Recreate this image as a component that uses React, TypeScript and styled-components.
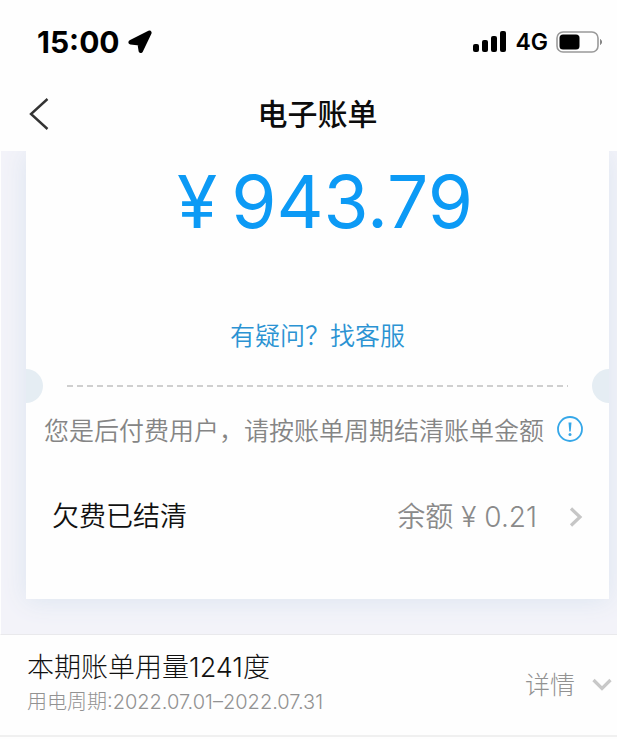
import React from "react";
import styled, { createGlobalStyle } from "styled-components";

const cjk = '"Noto Sans CJK SC", sans-serif';

const GlobalStyle = createGlobalStyle`
  * { box-sizing: border-box; }
  body {
    margin: 0;
    background: #fefefe;
    color: #111;
    font-family: Inter, ${cjk};
  }
  button {
    margin: 0;
    padding: 0;
    border: 0;
    background: none;
    color: inherit;
    font: inherit;
    text-align: left;
    cursor: pointer;
  }
`;

const Page = styled.div`
  display: flex;
  flex-direction: column;
`;

const StatusBar = styled.div`
  display: flex;
  align-items: center;
  justify-content: space-between;
  height: 84px;
  padding: 0 14px 0 37px;
  color: #000;
`;

const StatusGroup = styled.div`
  display: flex;
  align-items: center;
  gap: 8px;
`;

const Clock = styled.time`
  font-size: 30px;
  font-weight: 700;
  line-height: 32px;
`;

const Network = styled.span`
  font-size: 23px;
  font-weight: 600;
  line-height: 32px;
`;

const NavBar = styled.header`
  display: grid;
  grid-template-columns: 64px 1fr 46px;
  align-items: center;
  height: 67px;
  padding-bottom: 8px;
`;

const BackButton = styled.button`
  display: flex;
  align-items: center;
  height: 44px;
  padding-left: 29px;
`;

const Title = styled.h1`
  margin: 0;
  color: #0c0c0c;
  font: 500 30px/40px ${cjk};
  text-align: center;
  padding-bottom: 4px;
`;

const BillArea = styled.main`
  overflow: hidden;
  padding: 0 8px 35px 26px;
  border-left: 1px solid #fefefe;
  border-bottom: 1px solid #e9e9ec;
  background: #f3f3f9;
`;

const Card = styled.section`
  margin-left: -1px;
  padding-bottom: 62px;
  background: #fefefe;
  box-shadow: 0 2px 24px #dce5f0;
`;

const Amount = styled.div`
  display: flex;
  justify-content: center;
  gap: 14px;
  padding-top: 6px;
  padding-left: 15px;
  color: #0c9af5;
  font-size: 73px;
  font-weight: 400;
  line-height: 90px;
`;

const HelpLink = styled.a`
  display: block;
  width: fit-content;
  margin: 69px auto 0;
  color: #2b93d3;
  font: 350 25px/36px ${cjk};
  text-decoration: none;
`;

const TearLine = styled.div`
  display: flex;
  align-items: center;
  justify-content: space-between;
  gap: 24px;
  margin-top: 17px;
`;

const Notch = styled.span<{ $side: "left" | "right" }>`
  width: 17px;
  height: 34px;
  border-radius: ${(p) => (p.$side === "left" ? "0 17px 17px 0" : "17px 0 0 17px")};
  background: #e5edf3;
`;

const Dashes = styled.svg`
  flex: 1;
  min-width: 0;
  height: 2px;
`;

const Notice = styled.div`
  display: flex;
  align-items: center;
  justify-content: space-between;
  margin-top: 8px;
  padding: 0 26px 0 18px;
  color: #858585;
  font: 350 25px/36px ${cjk};
  white-space: nowrap;
`;

const IconButton = styled.button`
  display: flex;
`;

const BalanceRow = styled.button`
  display: flex;
  align-items: center;
  justify-content: space-between;
  width: 100%;
  margin-top: 50px;
  padding: 0 26px;
  line-height: 40px;
`;

const Settled = styled.span`
  color: #111;
  font-size: 27px;
  font-weight: 350;
`;

const Balance = styled.span`
  display: flex;
  align-items: center;
  color: #8a8a8a;
  font-size: 28px;
  font-weight: 350;
`;

const Currency = styled.span`
  padding: 0 8px;
`;

const Digits = styled.span`
  padding-right: 32px;
`;

const UsageRow = styled.button`
  display: flex;
  align-items: center;
  justify-content: space-between;
  width: 100%;
  height: 102px;
  padding: 0 5px 0 27px;
  border-bottom: 2px solid #f0f0f0;
`;

const UsageText = styled.span`
  display: flex;
  flex-direction: column;
  padding-bottom: 4px;
`;

const UsageTitle = styled.span`
  color: #111;
  font-size: 27px;
  font-weight: 300;
  line-height: 38px;
`;

const UsagePeriod = styled.span`
  color: #929292;
  font-size: 20px;
  font-weight: 300;
  line-height: 30px;
`;

const Details = styled.span`
  display: flex;
  align-items: center;
  gap: 17px;
  color: #929292;
  font-size: 25px;
  font-weight: 300;
  line-height: 36px;
`;

const LocationIcon = () => (
  <svg width="24" height="24" viewBox="0 0 24 24" aria-hidden="true">
    <path
      d="M21.4 2.8 L12.8 20.8 L11.6 13.4 L2.6 12.2 Z"
      fill="#000"
      stroke="#000"
      strokeWidth="4.4"
      strokeLinejoin="round"
    />
  </svg>
);

const SignalIcon = () => (
  <svg width="34" height="22" viewBox="0 0 34 22" aria-hidden="true">
    <rect x="0" y="13" width="6" height="8" rx="2" />
    <rect x="9" y="9" width="6" height="12" rx="2" />
    <rect x="18" y="5" width="6" height="16" rx="2" />
    <rect x="27" y="0" width="6" height="21" rx="2" />
  </svg>
);

const BatteryIcon = () => (
  <svg width="47" height="22" viewBox="0 0 47 22" aria-hidden="true">
    <rect x="1" y="1" width="41" height="20" rx="6" fill="none" stroke="#999" strokeWidth="1.6" />
    <rect x="3.5" y="3.5" width="20" height="15" rx="3.5" />
    <path d="M44.5 8.5 Q47 11 44.5 13.5 Z" fill="#888" stroke="#888" />
  </svg>
);

const BackIcon = () => (
  <svg width="20" height="32" viewBox="0 0 20 32" fill="none" aria-hidden="true">
    <path d="M18.5 1 L2 16 L18.5 31" stroke="#333" strokeWidth="2.4" />
  </svg>
);

const InfoIcon = () => (
  <svg width="26" height="26" viewBox="0 0 26 26" fill="none" aria-hidden="true">
    <circle cx="13" cy="13" r="12" stroke="#35a7e8" strokeWidth="1.8" />
    <path d="M11.5 6.5 H14.5 L13.7 15.5 H12.3 Z" fill="#35a7e8" />
    <circle cx="13" cy="18.5" r="1.5" fill="#35a7e8" />
  </svg>
);

const ChevronRight = () => (
  <svg width="14" height="20" viewBox="0 0 14 20" fill="none" aria-hidden="true">
    <path d="M2 1.5 L11 10 L2 18.5" stroke="#c6c6c6" strokeWidth="3.2" />
  </svg>
);

const ChevronDown = () => (
  <svg width="20" height="14" viewBox="0 0 20 14" fill="none" aria-hidden="true">
    <path d="M1.5 2 L10 10.5 L18.5 2" stroke="#c8c8c8" strokeWidth="3.2" />
  </svg>
);

export default function App() {
  return (
    <Page>
      <GlobalStyle />
      <StatusBar>
        <StatusGroup>
          <Clock>15:00</Clock>
          <LocationIcon />
        </StatusGroup>
        <StatusGroup>
          <SignalIcon />
          <Network>4G</Network>
          <BatteryIcon />
        </StatusGroup>
      </StatusBar>
      <NavBar>
        <BackButton type="button" aria-label="返回">
          <BackIcon />
        </BackButton>
        <Title>电子账单</Title>
      </NavBar>
      <BillArea>
        <Card>
          <Amount>
            <span>¥</span>
            <span>943.79</span>
          </Amount>
          <HelpLink href="#service">有疑问？找客服</HelpLink>
          <TearLine>
            <Notch $side="left" />
            <Dashes aria-hidden="true">
              <line x1="0" y1="1" x2="100%" y2="1" stroke="#cfcfcf" strokeWidth="2" strokeDasharray="6 4" />
            </Dashes>
            <Notch $side="right" />
          </TearLine>
          <Notice>
            您是后付费用户，请按账单周期结清账单金额
            <IconButton type="button" aria-label="说明">
              <InfoIcon />
            </IconButton>
          </Notice>
          <BalanceRow type="button">
            <Settled>欠费已结清</Settled>
            <Balance>
              余额
              <Currency>¥</Currency>
              <Digits>0.21</Digits>
              <ChevronRight />
            </Balance>
          </BalanceRow>
        </Card>
      </BillArea>
      <UsageRow type="button">
        <UsageText>
          <UsageTitle>本期账单用量1241度</UsageTitle>
          <UsagePeriod>用电周期:2022.07.01–2022.07.31</UsagePeriod>
        </UsageText>
        <Details>
          详情
          <ChevronDown />
        </Details>
      </UsageRow>
    </Page>
  );
}
